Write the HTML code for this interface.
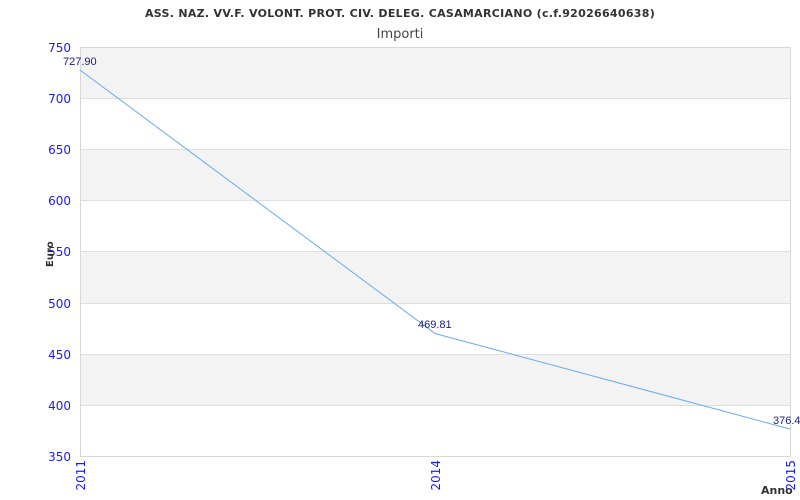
<!DOCTYPE html>
<html><head><style>body{margin:0;background:#fff}svg{display:block}</style></head><body>
<svg width="800" height="500" xmlns="http://www.w3.org/2000/svg" font-family="'DejaVu Sans','Liberation Sans',sans-serif">
<rect x="0" y="0" width="800" height="500" fill="#fff"/>
<rect x="80" y="47" width="710" height="51" fill="#f3f3f3"/>
<rect x="80" y="149" width="710" height="51" fill="#f3f3f3"/>
<rect x="80" y="251" width="710" height="52" fill="#f3f3f3"/>
<rect x="80" y="354" width="710" height="51" fill="#f3f3f3"/>
<g stroke="#e0e0e0" stroke-width="1">
<line x1="80" y1="98.5" x2="790" y2="98.5"/><line x1="80" y1="149.5" x2="790" y2="149.5"/>
<line x1="80" y1="200.5" x2="790" y2="200.5"/><line x1="80" y1="251.5" x2="790" y2="251.5"/>
<line x1="80" y1="303.5" x2="790" y2="303.5"/><line x1="80" y1="354.5" x2="790" y2="354.5"/>
<line x1="80" y1="405.5" x2="790" y2="405.5"/>
</g>
<rect x="80.5" y="47.5" width="710" height="409" fill="none" stroke="#d8d8d8"/>
<polyline points="80,70 435,333.5 790,429" fill="none" stroke="#6aaaf0" stroke-width="1"/>
<text x="400" y="17" text-anchor="middle" font-size="11" font-weight="bold" fill="#333" letter-spacing="0.3">ASS. NAZ. VV.F. VOLONT. PROT. CIV. DELEG. CASAMARCIANO (c.f.92026640638)</text>
<text x="400" y="38" text-anchor="middle" font-size="13" fill="#444">Importi</text>
<g font-size="12" fill="#1a1aff" text-anchor="end">
<text x="71" y="52">750</text><text x="71" y="103">700</text><text x="71" y="154">650</text>
<text x="71" y="205">600</text><text x="71" y="256">550</text><text x="71" y="308">500</text>
<text x="71" y="359">450</text><text x="71" y="410">400</text><text x="71" y="461">350</text>
</g>
<g font-size="12" fill="#1a1aff" text-anchor="end">
<text transform="translate(85,460) rotate(-90)">2011</text>
<text transform="translate(440,460) rotate(-90)">2014</text>
<text transform="translate(795,460) rotate(-90)">2015</text>
</g>
<g font-family="'Liberation Sans',sans-serif" font-size="11" fill="#1a1a80">
<text x="63" y="65">727.90</text><text x="418" y="328">469.81</text><text x="773" y="424">376.4</text>
</g>
<text transform="translate(53,267) rotate(-90)" font-size="10" font-weight="bold" fill="#333">Euro</text>
<text x="761" y="494" font-size="11" font-weight="bold" fill="#333">Anno</text>
</svg>
</body></html>
